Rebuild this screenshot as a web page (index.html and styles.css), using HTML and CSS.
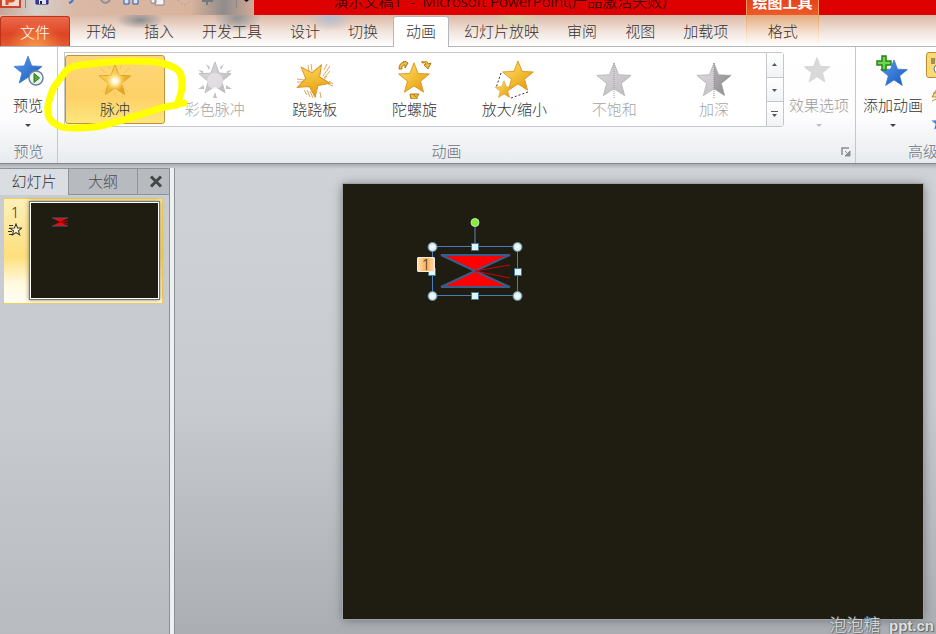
FILE: index.html
```html
<!DOCTYPE html>
<html lang="zh-CN">
<head>
<meta charset="utf-8">
<title>演示文稿1 - Microsoft PowerPoint</title>
<link rel="stylesheet" href="styles.css">
</head>
<body>
<svg class="defs" aria-hidden="true">
  <defs>
    <linearGradient id="gold" x1="0" y1="0" x2="1" y2="1"><stop offset="0" stop-color="#ffe27a"/><stop offset=".5" stop-color="#f3bd35"/><stop offset="1" stop-color="#dd9310"/></linearGradient>
    <linearGradient id="blue" x1="0" y1="0" x2="1" y2="1"><stop offset="0" stop-color="#5b9cf0"/><stop offset="1" stop-color="#1557bd"/></linearGradient>
    <linearGradient id="grey" x1="0" y1="0" x2="1" y2="1"><stop offset="0" stop-color="#dedcde"/><stop offset="1" stop-color="#bcb9bd"/></linearGradient>
    <linearGradient id="dark" x1="0" y1="0" x2="1" y2="1"><stop offset="0" stop-color="#b2b0b2"/><stop offset="1" stop-color="#8b898c"/></linearGradient>
    <radialGradient id="glow"><stop offset="0" stop-color="#fff"/><stop offset=".3" stop-color="#fff6cf"/><stop offset="1" stop-color="#ffd95a" stop-opacity="0"/></radialGradient>
    <radialGradient id="knob"><stop offset="0" stop-color="#fff"/><stop offset="1" stop-color="#c3e6ef"/></radialGradient>
    <path id="star" d="M0-18 4.5-6.2 17.1-5.6 7.3 2.4 10.6 14.6 0 7.7-10.6 14.6-7.3 2.4-17.1-5.6-4.5-6.2Z"/>
  </defs>
</svg>

<header class="titlebar">
  <div class="quick">
    <svg width="254" height="15" viewBox="0 0 254 15">
      <path d="M1 0V7H20V0" fill="#f7d8cc" stroke="#c8452a" stroke-width="2"/><path d="M7 0V5M7 1H11Q14 1 14-2" stroke="#d9502f" stroke-width="3" fill="none"/>
      <path d="M25.5 0V8" stroke="#8b8482"/>
      <path d="M36 0V4H48V0" fill="#3d3aa5" stroke="#26246f"/><path d="M39 0H46V4H39Z" fill="#dbe2f5"/><path d="M40 1H42V4H40Z" fill="#223"/>
      <path d="M69 3Q73 2 73-2" stroke="#3878d8" stroke-width="2" fill="none"/>
      <path d="M101 0Q105 6 110 0" stroke="#918f94" stroke-width="2" fill="none"/>
      <path d="M124 0V4H129V0M133 0V4H138V0" fill="#d6e5ff" stroke="#2b5ba6"/>
      <path d="M151 0V3H156V0M155 0V5H164V0" fill="#f4f4f4" stroke="#8a8790"/>
      <path d="M178 0Q184 9 191 0" stroke="#aaa2a0" stroke-dasharray="2 2" fill="none"/>
      <path d="M202 1H213M207 0V5" stroke="#77777c" stroke-width="2"/>
      <path d="M236.500 0V8" stroke="#8b8482"/><path d="M244 0H249L246.500 2Z" fill="#111"/>
    </svg>
  </div>
  <div class="caption">演示文稿1 &nbsp;- &nbsp;Microsoft PowerPoint(产品激活失败)</div>
  <div class="context-title">绘图工具</div>
  <div class="caption-end"></div>
</header>

<nav class="tabs">
  <button class="file">文件</button>
  <button class="tab">开始</button>
  <button class="tab">插入</button>
  <button class="tab">开发工具</button>
  <button class="tab">设计</button>
  <button class="tab">切换</button>
  <button class="tab active">动画</button>
  <button class="tab">幻灯片放映</button>
  <button class="tab">审阅</button>
  <button class="tab">视图</button>
  <button class="tab">加载项</button>
  <button class="tab context">格式</button>
</nav>

<section class="ribbon">
  <div class="group preview">
    <button class="big">
      <svg width="40" height="40" viewBox="-20 -20 40 40"><use href="#star" transform="translate(0 -1) scale(.82)" fill="url(#blue)" stroke="#3a74c8"/><circle cx="8" cy="6" r="7" fill="#eef3f6" stroke="#6c8696" stroke-width="1.500"/><path d="M6 1.500 11.500 6 6 10.500Z" fill="#4fae28" stroke="#2d7a16"/></svg>
      <span>预览</span><i class="arrow"></i>
    </button>
    <div class="group-name">预览</div>
  </div>

  <div class="group animation">
    <div class="group-body">
      <div class="gallery">
        <button class="effect selected">
          <svg width="40" height="38" viewBox="-20 -20 40 38"><path d="M-15-13-9-8M15-13 9-8M-7-17-5-12M7-17 5-12M-13 11-9 8M13 11 9 8M0 11V15" stroke="#f0c55c"/><use href="#star" transform="scale(.92)" fill="url(#gold)" stroke="#d9a02c"/><circle r="10" fill="url(#glow)"/></svg>
          <span>脉冲</span>
        </button>
        <button class="effect" disabled>
          <svg width="40" height="38" viewBox="-20 -20 40 38"><path d="M-9-17-5-14-6-11ZM9-17 5-14 6-11ZM-17-11-12-10-12-7ZM17-11 12-10 12-7ZM-17 8-11 4-11 8ZM17 8 11 4 11 8ZM0 11-2 17H2Z" fill="#c3c1c4"/><use href="#star" transform="translate(0 -2) scale(.94)" fill="url(#grey)" stroke="#bdbbbf"/><circle r="8" fill="#eeecf0" opacity=".6"/></svg>
          <span>彩色脉冲</span>
        </button>
        <button class="effect">
          <svg width="40" height="38" viewBox="-20 -20 40 38"><path d="M-7-16-6-10M-4-17-3-10M12-17 9-11M15-15 8-5M15-10 9-3M12-5 8 0M-18-2-11-1M-18 1-11 1M-11 9-8 14M-8 9-5 16M-5 10-2 17M5 11 6 17M14 0 18 3M13 3 18 5" stroke="#dba667" stroke-width="1"/><use href="#star" transform="translate(-2 -1) rotate(29) scale(.96)" fill="url(#gold)" stroke="#d9951b"/></svg>
          <span>跷跷板</span>
        </button>
        <button class="effect">
          <svg width="40" height="38" viewBox="-20 -20 40 38"><use href="#star" transform="translate(-1 -2) scale(.9)" fill="url(#gold)" stroke="#d9951b"/><path d="M-16-12Q-16-18-11-19L-12-21-7-18-10-13-10-16Q-14-16-13-12ZM7-20Q13-21 13-17L16-18 13-12 9-16 11-17Q10-19 7-18ZM-5 13H4L2 16V18H-4ZM-2 13 1 16" fill="#edbd44" stroke="#b37813"/></svg>
          <span>陀螺旋</span>
        </button>
        <button class="effect">
          <svg width="40" height="38" viewBox="-20 -20 40 38"><path d="M-13-8-18 7M-3 17 14 11" stroke="#333" stroke-dasharray="2 2"/><use href="#star" transform="translate(4 -4) scale(.9)" fill="url(#gold)" stroke="#d9951b"/><use href="#star" transform="translate(-10 9) scale(.52)" fill="url(#gold)" stroke="#d9951b"/></svg>
          <span>放大/缩小</span>
        </button>
        <button class="effect" disabled>
          <svg width="40" height="38" viewBox="-20 -20 40 38"><use href="#star" fill="url(#grey)" stroke="#bbb9bc"/><path d="M0-18V17" stroke="#999" stroke-dasharray="1 1"/></svg>
          <span>不饱和</span>
        </button>
        <button class="effect" disabled>
          <svg width="40" height="38" viewBox="-20 -20 40 38"><use href="#star" fill="url(#grey)" stroke="#bbb9bc"/><path d="M0-18 4.500-6.200 17.100-5.600 7.300 2.400 10.600 14.600 0 7.700Z" fill="url(#dark)"/><path d="M0-18V17" stroke="#888" stroke-dasharray="1 1"/></svg>
          <span>加深</span>
        </button>
      </div>
      <div class="scroller">
        <button aria-label="上一行"><svg width="7" height="6" viewBox="0 0 7 6"><path d="M1 4H6L3.500 1Z" fill="#555"/></svg></button>
        <button aria-label="下一行"><svg width="7" height="6" viewBox="0 0 7 6"><path d="M1 2H6L3.500 5Z" fill="#555"/></svg></button>
        <button aria-label="其他"><svg width="7" height="7" viewBox="0 0 7 7"><path d="M0 0H7V1H0ZM1 3H6L3.500 6Z" fill="#555"/></svg></button>
      </div>
      <button class="big options" disabled>
        <svg width="40" height="40" viewBox="-20 -20 40 40"><use href="#star" transform="translate(-2 -1) scale(.75)" fill="#d9d9d9" stroke="#d0d0d0"/></svg>
        <span>效果选项</span><i class="arrow"></i>
      </button>
    </div>
    <div class="group-name">动画</div>
    <svg class="launcher" width="10" height="10" viewBox="0 0 10 10"><path d="M1 8V1H8" fill="none" stroke="#8b8f94" stroke-width="1.500"/><path d="M4 4 6 6M9 4V9H4Z" fill="#8b8f94" stroke="#8b8f94"/></svg>
  </div>

  <div class="group advanced">
    <div class="group-body">
      <button class="big">
        <svg width="40" height="40" viewBox="-20 -20 40 40"><use href="#star" transform="translate(1 2) scale(.78)" fill="url(#blue)" stroke="#3a74c8"/><path d="M-11-16H-7V-11H-2V-7H-7V-2H-11V-7H-16V-11H-11Z" fill="#72d34c" stroke="#25851a" stroke-width="1.500"/></svg>
        <span>添加动画</span><i class="arrow"></i>
      </button>
      <div class="tools">
        <button class="tool on" aria-label="动画窗格"><svg width="24" height="24" viewBox="0 0 24 24"><path d="M4 6H8M4 8H8M4 10H8" stroke="#444"/><use href="#star" transform="translate(14 8) scale(.3)" fill="#cfe2ff" stroke="#357" stroke-width="3"/><circle cx="11" cy="16" r="4" fill="#fff" stroke="#58789a"/></svg></button>
        <button class="tool" aria-label="触发"><svg width="24" height="24" viewBox="0 0 24 24"><path d="M5 14 11 4 15 14ZM5 18 13 14M6 10H12" fill="#f8dc87" stroke="#b58a31"/></svg></button>
        <button class="tool" aria-label="动画刷"><svg width="24" height="24" viewBox="0 0 24 24"><use href="#star" transform="translate(12 10) scale(.45)" fill="url(#blue)"/></svg></button>
      </div>
    </div>
    <div class="group-name">高级动画</div>
  </div>

  <svg class="marker" width="146" height="80" viewBox="0 0 146 80"><path d="M22 17Q27 11 38 10C53 8 70 6 87 6C100 6 112 6 118 8Q136 12 138 20Q140 30 138 38L134 50Q125 51 118 53L90 62C75 67 66 69 58 71C46 73 40 73 30 73Q18 73 14 70Q5 65 5 58Q4 51 7 43Q9 34 14 28ZM134 49 141 48" fill="none" stroke="#ff0" stroke-width="7" stroke-linecap="round" stroke-linejoin="round"/></svg>
</section>

<main class="workspace">
  <aside class="panel">
    <div class="panel-tabs">
      <button class="panel-tab current">幻灯片</button>
      <button class="panel-tab">大纲</button>
      <button class="close" aria-label="关闭"><svg width="14" height="13" viewBox="0 0 14 13"><path d="M2 1.500 12 11.500M12 1.500 2 11.500" stroke="#444547" stroke-width="3"/></svg></button>
    </div>
    <button class="thumb">
      <span class="thumb-info">1
        <svg width="14" height="14" viewBox="0 0 14 14"><path d="M1 2.500H5M1 5.500H4M0 8.500H4M1 11.500H4" stroke="#333"/><use href="#star" transform="translate(8 7) scale(.34)" fill="#fff3c4" stroke="#333" stroke-width="3"/></svg>
      </span>
      <span class="thumb-slide"><svg width="18" height="10" viewBox="0 0 18 10"><path d="M1 1H17L9 5 17 9H1L9 5Z" fill="red"/><path d="M1 1H17M1 9H17" stroke="#3b5d89"/><path d="M9 5 17 4M9 5 17 7" stroke="#b00"/></svg></span>
    </button>
  </aside>
  <div class="canvas">
    <div class="slide">
      <svg class="shape" width="120" height="100" viewBox="0 0 120 100">
        <path d="M62 10V32" stroke="#3c5264" stroke-width="2"/>
        <path d="M28 41H97L62 57 97 73H28L62 57Z" fill="red" stroke="#385d8a" stroke-width="2"/>
        <path d="M97 51 62 57 97 64" fill="none" stroke="#d50000"/>
        <rect x="19.500" y="32.500" width="85" height="49" fill="none" stroke="#4a7ebb"/>
        <g fill="url(#knob)" stroke="#6d8490"><circle cx="19.500" cy="33" r="4.500"/><circle cx="104.500" cy="33" r="4.500"/><circle cx="19.500" cy="82" r="4.500"/><circle cx="104.500" cy="82" r="4.500"/></g>
        <g fill="#dff6fb" stroke="#4d7894"><path d="M58.500 29.500H65.500V36.500H58.500ZM58.500 78.500H65.500V85.500H58.500ZM15.500 54.500H22.500V61.500H15.500ZM101.500 54.500H108.500V61.500H101.500Z"/></g>
        <circle cx="62" cy="8.500" r="4" fill="#83ed3c" stroke="#c2e7ac"/>
      </svg>
      <button class="order">1</button>
    </div>
    <div class="watermark">泡泡糖 <b>ppt.cn</b></div>
  </div>
</main>
</body>
</html>
```
FILE: styles.css
```css
* { box-sizing: border-box; }
body {
  margin: 0;
  min-height: 100vh;
  display: flex;
  flex-direction: column;
  overflow: hidden;
  font: 300 15px/22px "Noto Sans", "Noto Sans CJK SC", sans-serif;
  color: #333;
}
button {
  margin: 0;
  padding: 0;
  border: 0;
  background: none;
  font: inherit;
  color: inherit;
  white-space: nowrap;
}
svg { display: block; flex: none; }
.defs { position: absolute; width: 0; height: 0; }

.titlebar { display: flex; height: 15px; overflow: hidden; background: #dd0101; }
.quick { flex: none; width: 254px; background: linear-gradient(90deg, #c9a594, #d5d0cd 14%, #d9b8a5 30%, #dab39c 75%, #8f8c8c 88%, #d3aa96); }
.caption, .context-title { display: flex; align-items: flex-end; justify-content: center; height: 15px; white-space: nowrap; }
.caption { flex: 492; padding-bottom: 3px; color: #180000; }
.context-title {
  flex: none;
  width: 73px;
  padding-bottom: 2px;
  border: solid #f39a57;
  border-width: 0 1px;
  background: linear-gradient(#e5441c, #ee5a26);
  color: #fff;
  font-weight: bold;
}
.caption-end { flex: 117; }

.tabs {
  display: flex;
  flex: none;
  height: 32px;
  border-bottom: 1px solid #b4b8bd;
  background:
    radial-gradient(ellipse 24px 9px at 140px 5px, #8b8d91, transparent),
    radial-gradient(ellipse 24px 14px at 237px 3px, #929394, transparent),
    radial-gradient(ellipse 22px 14px at 330px 2px, #b4bccd, transparent),
    radial-gradient(ellipse 24px 14px at 515px 3px, #d9d3a5, transparent),
    linear-gradient(#dbb8a5, #f2e5de 55%, #fff);
}
.file {
  width: 70px;
  margin: 1px 2px 0 0;
  border: 1px solid #bc3519;
  border-bottom: 0;
  border-radius: 3px 3px 0 0;
  background: radial-gradient(ellipse at 50% 110%, #f99a48, transparent 60%), linear-gradient(#ed684b, #dd4524 60%, #e25a30);
  color: #fff;
}
.tab { padding: 0 14px; }
.tab.active {
  margin: 1px 1px -1px;
  padding: 0 12px 2px;
  border: 1px solid #b4b8bd;
  border-bottom: 0;
  border-radius: 3px 3px 0 0;
  background: #fff;
}
.tab.context {
  width: 73px;
  margin-left: 4px;
  border: solid;
  border-width: 0 1px;
  border-image: linear-gradient(#ea9b55, #fff) 1;
  background: linear-gradient(#e3ab80, #f7e4d5 60%, #fff);
}

.ribbon {
  position: relative;
  display: flex;
  flex: none;
  height: 117px;
  overflow: hidden;
  border-bottom: 1px solid #83888e;
  background: linear-gradient(#fff, #fdfdfe 60%, #f2f4f6 80%, #e8ebee);
}
.group { position: relative; display: flex; flex-direction: column; flex: none; padding-top: 5px; border-right: 1px solid #c4c8cc; }
.preview { width: 58px; }
.animation { flex: 1; padding-left: 6px; }
.advanced { width: 80px; border: 0; padding-left: 7px; }
.group-body { display: flex; flex: none; height: 88px; }
.group-name { text-align: center; color: #6a6f7b; }
.preview .big { height: 88px; }
.animation .group-name { padding-right: 26px; }
.advanced .group-name { padding-left: 45px; white-space: nowrap; text-align: left; }
.launcher { position: absolute; right: 4px; bottom: 6px; }
.big { display: flex; flex-direction: column; align-items: center; }
.preview .big { width: 56px; }
.big span { margin-top: 2px; }
.arrow { margin-top: 8px; border: 3px solid transparent; border-top-color: #444; border-bottom: 0; }
.big:disabled { color: #9b9b9b; }
.big:disabled .arrow { border-top-color: #c1c1c1; }
.gallery {
  display: flex;
  flex: 1;
  height: 75px;
  padding: 2px 2px 2px 0;
  border: 1px solid #c4c8cc;
  border-right: 0;
  background: #fff;
}
.effect {
  display: flex;
  flex: 1;
  flex-direction: column;
  align-items: center;
  height: 69px;
  padding-top: 5px;
  border: 1px solid transparent;
  border-radius: 3px;
}
.effect span { line-height: 20px; }
.effect:disabled { color: #a6a4a6; }
.effect.selected { border-color: #c0923e; background: linear-gradient(#fcd778, #fed168 60%, #fde57d); }
.scroller { display: flex; flex-direction: column; width: 18px; height: 75px; border: 1px solid #c4c8cc; border-radius: 0 3px 3px 0; }
.scroller button { display: flex; flex: 1; align-items: center; justify-content: center; background: linear-gradient(#fff, #f1f3f5); }
.scroller button + button { border-top: 1px solid #c4c8cc; }
.options { margin: 0 6px 0 5px; }
.tools { display: flex; flex-direction: column; gap: 4px; margin-left: 3px; }
.tool { width: 26px; height: 26px; border: 1px solid transparent; border-radius: 3px; }
.tool.on { border-color: #b98d38; background: #fdda70; }
.marker { position: absolute; left: 43px; top: 8px; }

.workspace { display: flex; flex: 1; padding-top: 4px; background: linear-gradient(#a9adb2, #cfd2d6 5px, #c8cbcf 50%, #abafb4); }
.panel { width: 170px; border-right: 1px solid #8b9097; background: linear-gradient(#d9dce0, #c9ccd0 30px, #c8cbcf 50%, #b8bbc0); }
.panel-tabs { display: flex; height: 27px; border-top: 1px solid #8e9399; }
.panel-tab { width: 69px; padding-bottom: 2px; border: solid #8e9399; border-width: 0 1px 1px 0; background: #b7bbc0; color: #4c4f52; }
.panel-tab.current { border-bottom: 0; background: #dadde1; color: #333; }
.close { display: flex; flex: 1; align-items: center; justify-content: center; padding-left: 4px; border-bottom: 1px solid #8e9399; background: #b7bbc0; }
.thumb {
  display: flex;
  width: 160px;
  height: 106px;
  margin: 3px;
  padding: 2px;
  border: 1px solid #f2ce55;
  border-radius: 2px;
  background: linear-gradient(#fdf0b8, #fedf7d 55%, #fff9dc 80%, #fffef5);
}
.thumb-info { display: flex; flex-direction: column; align-items: center; width: 23px; padding-right: 5px; }
.thumb-slide { flex: 1; height: 99px; padding: 15px 0 0 21px; border: 1px solid #73777b; box-shadow: inset 0 0 0 1px #fff, 0 0 4px #8b7d4c; background: #1f1c11; }

.canvas { position: relative; display: flex; flex: 1; margin-left: 4px; padding: 16px 13px 15px 168px; border-left: 1px solid #8b9097; box-shadow: -4px 0 #eef0f2; }
.slide { position: relative; flex: 1; background: #1f1c11; box-shadow: 0 0 0 1px #9fa3a7, 0 1px 10px #6d7176; }
.shape { position: absolute; left: 70px; top: 30px; }
.order {
  position: absolute;
  left: 74px;
  top: 73px;
  width: 18px;
  height: 15px;
  border: 1px solid #f2ece5;
  border-radius: 1px;
  background: linear-gradient(90deg, #ffdeb4, #ffae4b, #ffd9a8);
  line-height: 13px;
}
.watermark { position: absolute; right: 2px; bottom: -2px; color: #dee1e4; font-size: 17px; text-shadow: 0 0 2px #555, 1px 1px 1px #666; }
.watermark b { margin-left: 4px; font: bold 15px "Liberation Sans", sans-serif; }
```
